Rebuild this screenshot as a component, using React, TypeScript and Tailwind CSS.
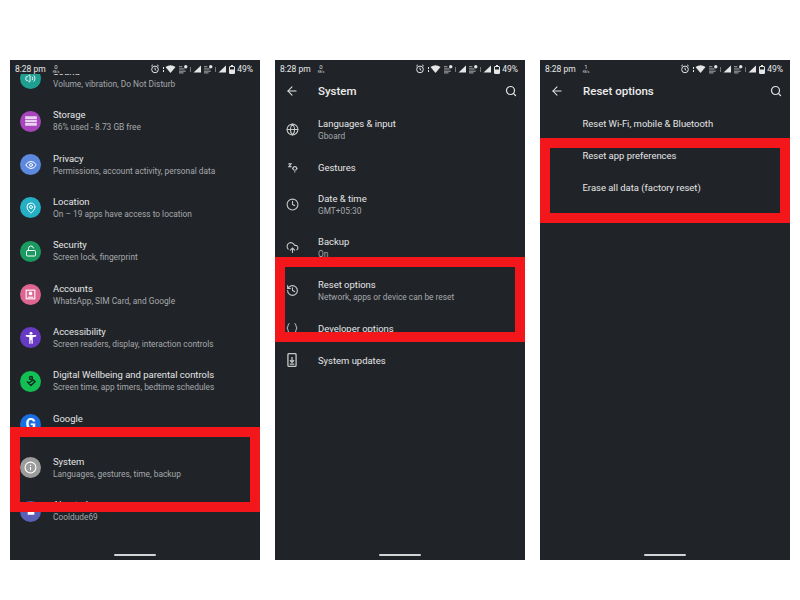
import { ReactNode } from 'react'
import { ArrowLeft, Search, Globe, Clock, History, CloudUpload, Eye, MapPin, LockOpen, Volume2 } from 'lucide-react'

function StatusIcons() {
  return (
    <div className="flex items-center text-[#e6e6e6]">
      {/* alarm */}
      <svg width="10" height="10" viewBox="0 0 24 24" fill="none" stroke="currentColor" strokeWidth="2.4">
        <circle cx="12" cy="13" r="8" />
        <path d="M12 9v4l3 2M3 5l4-3M21 5l-4-3" />
      </svg>
      <span className="ml-[3px] flex flex-col gap-[1px]">
        <span className="w-[1px] h-[2px] bg-[#e6e6e6]" />
        <span className="w-[1px] h-[2px] bg-[#e6e6e6]" />
      </span>
      {/* wifi */}
      <svg className="ml-[1px]" width="11" height="8" viewBox="0 0 20 16" fill="currentColor">
        <path d="M0 4 Q10 -3 20 4 L10 16 Z" />
      </svg>
      <NetIcon />
      <NetIcon />
      {/* battery */}
      <svg className="ml-[3px]" width="6" height="9" viewBox="0 0 12 18" fill="none">
        <rect x="1" y="3" width="10" height="14" rx="1" stroke="#e6e6e6" strokeWidth="2" />
        <rect x="4" y="0" width="4" height="3" fill="#e6e6e6" />
        <rect x="1" y="9" width="10" height="8" fill="#e6e6e6" />
      </svg>
      <span className="ml-[2px] text-[8.5px] leading-none">49%</span>
    </div>
  )
}

function NetIcon() {
  return (
    <span className="flex items-center ml-[3px]">
      <svg width="9" height="9" viewBox="0 0 16 16" fill="#9a9a9a">
        <rect x="0" y="2" width="6" height="2" />
        <rect x="0" y="6" width="10" height="2" />
        <rect x="0" y="10" width="12" height="2" />
        <rect x="0" y="13" width="8" height="2" />
        <circle cx="12" cy="3" r="3" fill="#e6e6e6" />
      </svg>
      <span className="ml-[2px] w-[1px] h-[5px] bg-[#777]" />
      <svg className="ml-[2px]" width="8" height="8" viewBox="0 0 16 16" fill="#e6e6e6">
        <path d="M16 1V15H1Z" />
      </svg>
    </span>
  )
}

function StatusBar({ speed }: { speed: string }) {
  return (
    <div className="h-[14px] shrink-0 flex items-end justify-between pl-[5px] pr-[7px] bg-[#202429]">
      <div className="flex items-end">
        <span className="text-[8.5px] leading-[10px] text-[#e8e8e8]">8:28 pm</span>
        <span className="ml-[7px] flex flex-col items-center text-[#d8d8d8]">
          <span className="text-[6px] leading-[6px]">{speed}</span>
          <span className="text-[3px] leading-[4px]">KB/s</span>
        </span>
      </div>
      <StatusIcons />
    </div>
  )
}

function Header({ title }: { title: string }) {
  return (
    <div className="h-[34px] shrink-0 flex items-center pl-[10px] pr-[8px]">
      <ArrowLeft size={14} strokeWidth={1.8} className="text-[#e8e8e8]" />
      <span className="ml-[19px] pt-[2px] flex-1 text-[11.5px] font-medium text-[#ececec]">{title}</span>
      <Search size={12} strokeWidth={2.4} className="text-[#e4e4e4]" />
    </div>
  )
}

function Phone({ children, highlightTop }: { children: ReactNode; highlightTop: string }) {
  return (
    <div className="relative w-[250px] h-[500px] bg-[#202429] flex flex-col overflow-hidden">
      {children}
      <div className="absolute left-1/2 -translate-x-1/2 bottom-[4px] w-[42px] h-[2px] rounded-full bg-[#d4d4d4]" />
      <div className={`absolute left-0 w-[250px] h-[85px] border-[10px] border-[#f3161b] ${highlightTop}`} />
    </div>
  )
}

function Badge({ color, children }: { color: string; children: ReactNode }) {
  return (
    <span className={`w-[21px] h-[21px] rounded-full flex items-center justify-center text-white shrink-0 ${color}`}>
      {children}
    </span>
  )
}

const mainRows: { title: string; sub: string; color: string; icon: ReactNode }[] = [
  { title: 'Sound', sub: 'Volume, vibration, Do Not Disturb', color: 'bg-[#1f9e92]', icon: <Volume2 size={11} /> },
  {
    title: 'Storage',
    sub: '86% used - 8.73 GB free',
    color: 'bg-[#a845bd]',
    icon: (
      <svg width="14" height="14" viewBox="0 0 24 24" fill="#e8d4ee">
        <path d="M2 4h20v4.6H2zM2 9.7h20v4.6H2zM2 15.4h20V20H2z" />
      </svg>
    ),
  },
  {
    title: 'Privacy',
    sub: 'Permissions, account activity, personal data',
    color: 'bg-[#5c88de]',
    icon: <Eye size={12} />,
  },
  {
    title: 'Location',
    sub: 'On – 19 apps have access to location',
    color: 'bg-[#26aec4]',
    icon: <MapPin size={12} />,
  },
  {
    title: 'Security',
    sub: 'Screen lock, fingerprint',
    color: 'bg-[#1a9a60]',
    icon: <LockOpen size={12} />,
  },
  {
    title: 'Accounts',
    sub: 'WhatsApp, SIM Card, and Google',
    color: 'bg-[#de6590]',
    icon: (
      <svg width="13" height="13" viewBox="0 0 24 24" fill="none" stroke="currentColor" strokeWidth="2">
        <rect x="4" y="4" width="16" height="16" />
        <circle cx="12" cy="10" r="2.5" fill="currentColor" />
        <path d="M7 17h10" />
      </svg>
    ),
  },
  {
    title: 'Accessibility',
    sub: 'Screen readers, display, interaction controls',
    color: 'bg-[#673ac4]',
    icon: (
      <svg width="14" height="14" viewBox="0 0 24 24" fill="currentColor">
        <circle cx="12" cy="4" r="2.5" />
        <path d="M3 7h18v2.5l-6 1V22h-2.2v-6h-1.6v6H9V10.5l-6-1z" />
      </svg>
    ),
  },
  {
    title: 'Digital Wellbeing and parental controls',
    sub: 'Screen time, app timers, bedtime schedules',
    color: 'bg-[#12bf55]',
    icon: (
      <svg width="12" height="12" viewBox="0 0 24 24" fill="none" stroke="#1a2a20" strokeWidth="3">
        <circle cx="12" cy="6" r="3" />
        <path d="M4 13l8 8 8-8-4-3-4 3-4 3z" />
      </svg>
    ),
  },
  {
    title: 'Google',
    sub: 'Services & preferences',
    color: 'bg-[#1a6fe0]',
    icon: <span className="text-[15px] font-bold leading-none">G</span>,
  },
  {
    title: 'System',
    sub: 'Languages, gestures, time, backup',
    color: 'bg-[#9c9c9c]',
    icon: (
      <svg width="13" height="13" viewBox="0 0 24 24" fill="none" stroke="currentColor" strokeWidth="2">
        <circle cx="12" cy="12" r="10" />
        <path d="M12 11v6M12 7v2" />
      </svg>
    ),
  },
  {
    title: 'About phone',
    sub: 'Cooldude69',
    color: 'bg-[#5a5fb8]',
    icon: (
      <svg width="10" height="10" viewBox="0 0 24 24" fill="currentColor">
        <path d="M4 3h16v18H4z" />
      </svg>
    ),
  },
]

const systemRows: { title: string; sub?: string; icon: ReactNode }[] = [
  { title: 'Languages & input', sub: 'Gboard', icon: <Globe size={13} /> },
  {
    title: 'Gestures',
    icon: (
      <svg width="11" height="11" viewBox="0 0 24 24" fill="none" stroke="currentColor" strokeWidth="2.4">
        <path d="M3 4h6L4 10h6" />
        <circle cx="17" cy="14" r="4" />
        <path d="M11 14h2M21 14h2M17 20v3" />
      </svg>
    ),
  },
  { title: 'Date & time', sub: 'GMT+05:30', icon: <Clock size={13} /> },
  { title: 'Backup', sub: 'On', icon: <CloudUpload size={13} /> },
  { title: 'Reset options', sub: 'Network, apps or device can be reset', icon: <History size={13} /> },
  {
    title: 'Developer options',
    icon: (
      <svg width="12" height="12" viewBox="0 0 24 24" fill="none" stroke="currentColor" strokeWidth="2">
        <path d="M7 3C3 3 5 10 2 12c3 2 1 9 5 9M17 3c4 0 2 7 5 9-3 2-1 9-5 9" />
      </svg>
    ),
  },
  {
    title: 'System updates',
    icon: (
      <svg width="12" height="14" viewBox="0 0 20 24" fill="none" stroke="currentColor" strokeWidth="2.2">
        <rect x="3" y="1" width="14" height="22" rx="2" />
        <path d="M10 7v9M6.5 12.5L10 16l3.5-3.5M6 19h8" />
      </svg>
    ),
  },
]

const resetRows = ['Reset Wi-Fi, mobile & Bluetooth', 'Reset app preferences', 'Erase all data (factory reset)']

export default function App() {
  return (
    <div className="w-[800px] h-[600px] bg-white pl-[10px] pt-[60px] flex gap-[15px] font-['Roboto',sans-serif]">
      <Phone highlightTop="top-[367px]">
        <StatusBar speed="0" />
        <div className="flex-1 overflow-hidden">
          <div className="-mt-[17.67px]">
            {mainRows.map((row) => (
              <div key={row.title} className="h-[43.33px] flex items-center pl-[10px]">
                <Badge color={row.color}>{row.icon}</Badge>
                <div className="ml-[12px]">
                  <div className="text-[9.45px] leading-[12px] text-[#e6e6e6]">{row.title}</div>
                  <div className="text-[8.35px] leading-[12px] text-[#a6a8aa]">{row.sub}</div>
                </div>
              </div>
            ))}
          </div>
        </div>
      </Phone>

      <Phone highlightTop="top-[197px]">
        <StatusBar speed="0" />
        <Header title="System" />
        {systemRows.map((row) => (
          <div key={row.title} className={`flex items-center ${row.sub ? 'h-[43px]' : 'h-[32px]'}`}>
            <span className="w-[43px] pr-[9px] flex justify-center text-[#c8c8c8] shrink-0">{row.icon}</span>
            <div className="pt-[1px]">
              <div className="text-[9.45px] leading-[12px] text-[#e6e6e6]">{row.title}</div>
              {row.sub && <div className="text-[8.35px] leading-[12px] text-[#a6a8aa]">{row.sub}</div>}
            </div>
          </div>
        ))}
      </Phone>

      <Phone highlightTop="top-[78px]">
        <StatusBar speed="1" />
        <Header title="Reset options" />
        {resetRows.map((title) => (
          <div key={title} className="h-[32px] flex items-center pl-[42.5px] text-[9.45px] text-[#e6e6e6]">
            {title}
          </div>
        ))}
      </Phone>
    </div>
  )
}
